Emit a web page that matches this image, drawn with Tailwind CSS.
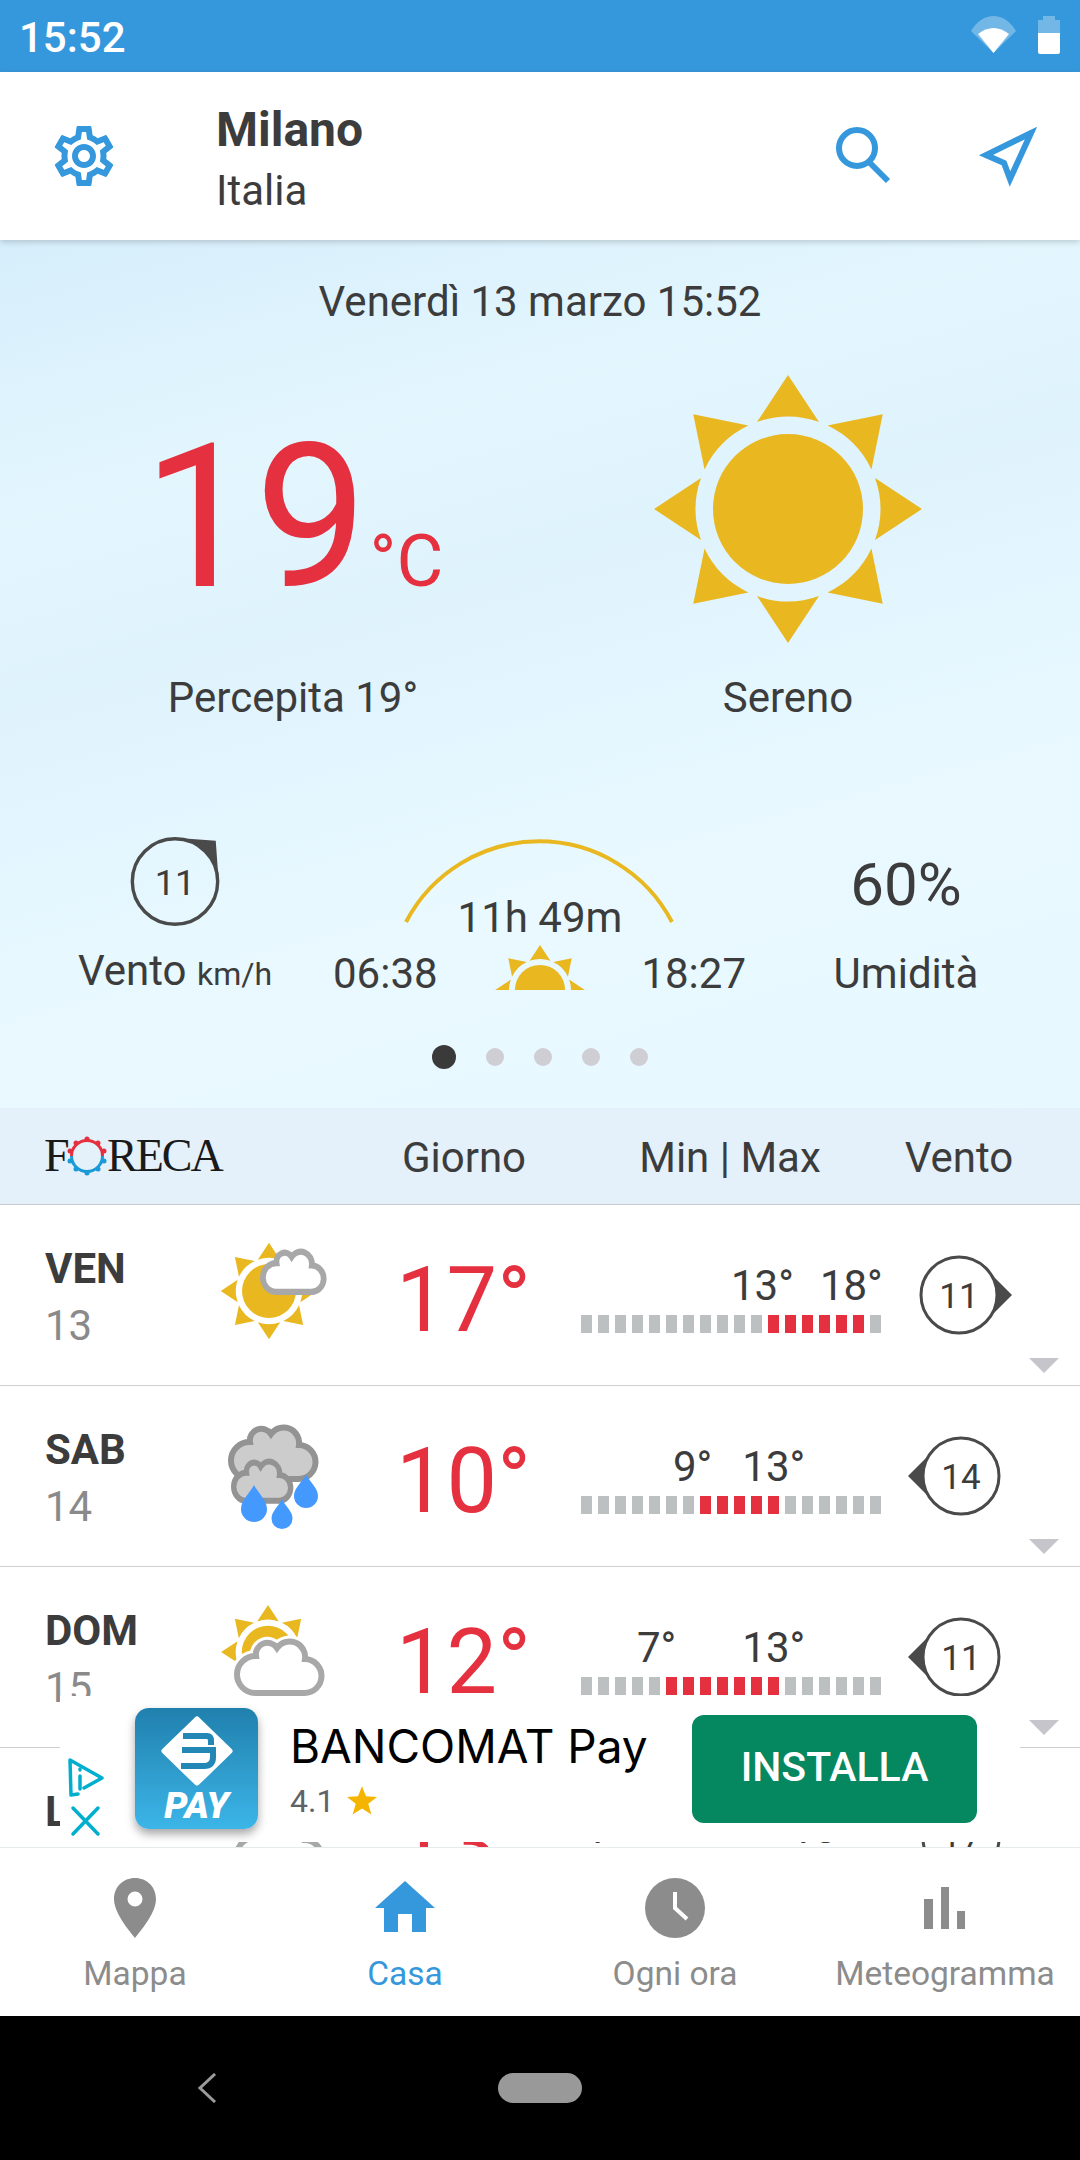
<!DOCTYPE html>
<html lang="it">
<head>
  <meta charset="UTF-8">
  <meta name="viewport" content="width=device-width, initial-scale=1.0">
  <title>Foreca</title>
  <script src="https://cdn.jsdelivr.net/npm/@tailwindcss/browser@4"></script>
</head>
<body class="bg-black font-['Roboto',sans-serif] text-[#3c3c3c]">
  <!-- shared shapes -->
  <svg class="absolute w-0 h-0">
    <defs>
      <path id="ray" d="M0-134 31-87A92 92 0 0 0-31-87Z"/>
      <g id="sun" fill="#e9b820">
        <circle r="75"/>
        <use href="#ray"/><use href="#ray" transform="rotate(45)"/><use href="#ray" transform="rotate(90)"/><use href="#ray" transform="rotate(135)"/>
        <use href="#ray" transform="rotate(180)"/><use href="#ray" transform="rotate(225)"/><use href="#ray" transform="rotate(270)"/><use href="#ray" transform="rotate(315)"/>
      </g>
      <g id="sun-top" fill="#e9b820">
        <circle r="75"/>
        <use href="#ray"/><use href="#ray" transform="rotate(45)"/><use href="#ray" transform="rotate(-45)"/><use href="#ray" transform="rotate(-90)"/>
      </g>
      <path id="cloud" d="M22 55A18.500 18.500 0 0 1 23 18 11.500 11.500 0 0 1 44 10 15.500 15.500 0 0 1 72 21 17 17 0 0 1 71 55Z"/>
    </defs>
  </svg>

  <div class="relative w-[1080px] h-[2160px] overflow-hidden flex flex-col bg-white">
    <!-- status bar -->
    <div class="h-[72px] bg-[#3698dc] flex items-center justify-between pl-[19px] shrink-0">
      <span class="text-white text-[42px] leading-[72px] pt-[3px] font-medium">15:52</span>
      <svg class="w-[110px] h-[72px]" viewBox="970 0 110 72">
        <path d="M971 31C983 11 1004 11 1016 31L993.500 53Z" fill="#fff" fill-opacity=".3"/>
        <path d="M978 34C988 26 999 26 1009 34L993.500 53Z" fill="#fff"/>
        <path d="M1043 16H1055V20H1060V33H1038V20H1043Z" fill="#fff" fill-opacity=".3"/>
        <path d="M1038 33H1060V52Q1060 54 1058 54H1040Q1038 54 1038 52Z" fill="#fff"/>
      </svg>
    </div>

    <!-- header -->
    <div class="relative z-10 h-[168px] bg-white shadow-[0_2px_6px_rgba(0,0,0,0.18)] flex shrink-0">
      <div class="w-[216px] flex items-center pl-[48px]">
        <svg class="w-[72px] h-[72px]" viewBox="0 0 24 24" fill="#3698dc"><path d="M19.43 12.98c.04-.32.07-.64.07-.98 0-.34-.03-.66-.07-.98l2.11-1.65c.19-.15.24-.42.12-.64l-2-3.46c-.09-.16-.26-.25-.44-.25-.06 0-.12.01-.17.03l-2.49 1c-.52-.4-1.08-.73-1.69-.98l-.38-2.65C14.46 2.18 14.25 2 14 2h-4c-.25 0-.46.18-.49.42l-.38 2.65c-.61.25-1.17.59-1.69.98l-2.49-1c-.06-.02-.12-.03-.18-.03-.17 0-.34.09-.43.25l-2 3.46c-.13.22-.07.49.12.64l2.11 1.65c-.04.32-.07.65-.07.98 0 .33.03.66.07.98l-2.11 1.65c-.19.15-.24.42-.12.64l2 3.46c.09.16.26.25.44.25.06 0 .12-.01.17-.03l2.49-1c.52.4 1.08.73 1.69.98l.38 2.65c.03.24.24.42.49.42h4c.25 0 .46-.18.49-.42l.38-2.65c.61-.25 1.17-.59 1.69-.98l2.49 1c.06.02.12.03.18.03.17 0 .34-.09.43-.25l2-3.46c.12-.22.07-.49-.12-.64l-2.11-1.65zm-1.98-1.71c.04.31.05.52.05.73 0 .21-.02.43-.05.73l-.14 1.13.89.7 1.08.84-.7 1.21-1.27-.51-1.04-.42-.9.68c-.43.32-.84.56-1.25.73l-1.06.43-.16 1.13-.2 1.35h-1.4l-.19-1.35-.16-1.13-1.06-.43c-.43-.18-.83-.41-1.23-.71l-.91-.7-1.06.43-1.27.51-.7-1.21 1.08-.84.89-.7-.14-1.13c-.03-.31-.05-.54-.05-.74s.02-.43.05-.73l.14-1.13-.89-.7-1.08-.84.7-1.21 1.27.51 1.04.42.9-.68c.43-.32.84-.56 1.25-.73l1.06-.43.16-1.13.2-1.35h1.39l.19 1.35.16 1.13 1.06.43c.43.18.83.41 1.23.71l.91.7 1.06-.43 1.27-.51.7 1.21-1.07.85-.89.7.14 1.13zM12 8c-2.21 0-4 1.79-4 4s1.79 4 4 4 4-1.79 4-4-1.79-4-4-4zm0 6c-1.1 0-2-.9-2-2s.9-2 2-2 2 .9 2 2-.9 2-2 2z"/></svg>
      </div>
      <div class="flex-1 pt-[29px]">
        <div class="text-[48px] leading-[58px] font-bold">Milano</div>
        <div class="text-[42px] leading-[48px] mt-[8px]">Italia</div>
      </div>
      <svg class="w-[280px] h-[168px]" viewBox="800 72 280 168" fill="none" stroke="#3698dc" stroke-width="6">
        <circle cx="857" cy="148" r="18"/>
        <path d="M869 162 888 181"/>
        <path d="M1031 133 986 155 1004 163 1010 179Z" stroke-linejoin="miter"/>
      </svg>
    </div>

    <!-- current conditions -->
    <div class="h-[868px] shrink-0 bg-[linear-gradient(165deg,#d6eefb_0%,#e3f6fe_25%,#dff3fd_40%,#e9f9ff_70%,#e7f8ff_100%)]">
      <div class="text-center text-[42px] leading-[48px] pt-[38px]">Venerdì 13 marzo 15:52</div>

      <div class="flex h-[398px]">
        <div class="w-[586px] flex flex-col items-center">
          <div class="mt-[92px] h-[200px] flex items-baseline text-[#e5303f]">
            <span class="text-[200px] leading-[200px]">19</span>
            <span class="text-[72px] leading-[66px] ml-[2px]">°C</span>
          </div>
          <div class="mt-[56px] text-[42px] leading-[48px]">Percepita 19°</div>
        </div>
        <div class="w-[404px] flex flex-col items-center">
          <svg class="mt-[48px] w-[270px] h-[270px]" viewBox="-135 -135 270 270"><use href="#sun"/></svg>
          <div class="mt-[30px] text-[42px] leading-[48px]">Sereno</div>
        </div>
      </div>

      <div class="flex pl-[20px] mt-[109px] h-[165px]">
        <div class="w-[310px] flex flex-col items-center">
          <svg class="w-[100px] h-[100px]" viewBox="125 833 100 100">
            <circle cx="175" cy="883" r="44" fill="none" stroke="#4a4a4a" stroke-width="3.500"/>
            <path d="M175 838 217 841 220 883A45 45 0 0 0 175 838Z" fill="#4a4a4a"/>
            <text x="175" y="897" text-anchor="middle" font-size="37" fill="#3c3c3c">11</text>
          </svg>
          <div class="mt-[17px] text-[42px] leading-[48px]">Vento <span class="text-[32px]">km/h</span></div>
        </div>
        <div class="w-[420px] flex flex-col items-center">
          <svg class="w-[290px] h-[87px] mt-[3px] shrink-0" viewBox="395 836 290 87" fill="none"><path d="M406 922A150 150 0 0 1 672 922" stroke="#e9b820" stroke-width="4"/></svg>
          <div class="-mt-[29px] text-[42px] leading-[48px]">11h 49m</div>
          <div class="w-full flex justify-between items-end pl-[3px] pr-[4px] mt-[8px]">
            <span class="text-[42px] leading-[48px]">06:38</span>
            <svg class="w-[94px] h-[45px] -mt-[5px] mb-[8px]" viewBox="-47 -45 94 45"><use href="#sun" transform="scale(.335)"/></svg>
            <span class="text-[42px] leading-[48px]">18:27</span>
          </div>
        </div>
        <div class="w-[312px] flex flex-col items-center">
          <div class="mt-[20px] text-[60px] leading-[64px]">60%</div>
          <div class="mt-[33px] text-[42px] leading-[48px]">Umidità</div>
        </div>
      </div>

      <div class="flex justify-center items-center gap-[30px] mt-[47px]">
        <div class="w-[24px] h-[24px] rounded-full bg-[#3a3a3a]"></div>
        <div class="w-[18px] h-[18px] rounded-full bg-[#ceced4]"></div>
        <div class="w-[18px] h-[18px] rounded-full bg-[#ceced4]"></div>
        <div class="w-[18px] h-[18px] rounded-full bg-[#ceced4]"></div>
        <div class="w-[18px] h-[18px] rounded-full bg-[#ceced4]"></div>
      </div>
    </div>

    <!-- table head -->
    <div class="h-[97px] shrink-0 bg-[#e4f0fa] border-b border-[#c5cbd0] flex items-center text-[42px] leading-[48px]">
      <div class="w-[340px] pl-[44px] flex items-center text-[#1a1a1a] font-['Liberation_Serif',serif] text-[46px] leading-[48px] tracking-[-2px]">
        <span class="w-[23px]">F</span>
        <svg class="w-[40px] h-[40px] shrink-0" viewBox="-20 -20 40 40" fill="none" stroke-width="3">
          <path d="M-15.500 0A15.500 15.500 0 0 1 15.500 0" stroke="#e5303f"/>
          <path d="M-15.500 0A15.500 15.500 0 0 0 15.500 0" stroke="#1a9ad6"/>
          <g fill="#e5303f" stroke="none"><circle cx="0" cy="-17" r="2.500"/><circle cx="-11" cy="-13" r="2.500"/><circle cx="11" cy="-13" r="2.500"/><circle cx="-17" cy="-5" r="2.500"/><circle cx="17" cy="-5" r="2.500"/></g>
          <g fill="#1a9ad6" stroke="none"><circle cx="0" cy="17" r="2.500"/><circle cx="-11" cy="13" r="2.500"/><circle cx="11" cy="13" r="2.500"/><circle cx="-17" cy="5" r="2.500"/><circle cx="17" cy="5" r="2.500"/></g>
        </svg>
        <span>RECA</span>
      </div>
      <div class="w-[248px] text-center pt-[4px]">Giorno</div>
      <div class="w-[284px] text-center pt-[4px]">Min | Max</div>
      <div class="w-[174px] text-center pt-[4px]">Vento</div>
    </div>

    <!-- daily list -->
    <div class="flex-1 overflow-hidden">
      <!-- friday -->
      <div class="relative h-[181px] border-b border-[#cfcfcf] flex pl-[45px]">
        <div class="w-[165px] pt-[41px]">
          <div class="text-[42px] leading-[46px] font-bold">VEN</div>
          <div class="text-[42px] leading-[48px] mt-[10px] text-[#8a8a8a]">13</div>
        </div>
        <svg class="w-[120px] h-[180px]" viewBox="210 0 120 180">
          <use href="#sun" transform="translate(269 86) scale(.36)"/>
          <use href="#cloud" transform="translate(260 44) scale(.72 .78)" fill="#fff" stroke="#a8a8a8" stroke-width="8"/>
        </svg>
        <div class="w-[251px] pl-[66px] pt-[51px] text-[90px] leading-[90px] text-[#e5303f]">17°</div>
        <div class="w-[300px] pt-[57px]">
          <div class="flex text-[42px] leading-[48px]"><span class="ml-[150px]">13°</span><span class="ml-[26px]">18°</span></div>
          <div class="flex gap-[6px] mt-[5px]">
            <i class="w-[11px] h-[18px] bg-[#bcc0c1]"></i><i class="w-[11px] h-[18px] bg-[#bcc0c1]"></i><i class="w-[11px] h-[18px] bg-[#bcc0c1]"></i><i class="w-[11px] h-[18px] bg-[#bcc0c1]"></i><i class="w-[11px] h-[18px] bg-[#bcc0c1]"></i><i class="w-[11px] h-[18px] bg-[#bcc0c1]"></i><i class="w-[11px] h-[18px] bg-[#bcc0c1]"></i><i class="w-[11px] h-[18px] bg-[#bcc0c1]"></i><i class="w-[11px] h-[18px] bg-[#bcc0c1]"></i><i class="w-[11px] h-[18px] bg-[#bcc0c1]"></i><i class="w-[11px] h-[18px] bg-[#bcc0c1]"></i>
            <i class="w-[11px] h-[18px] bg-[#e5303f]"></i><i class="w-[11px] h-[18px] bg-[#e5303f]"></i><i class="w-[11px] h-[18px] bg-[#e5303f]"></i><i class="w-[11px] h-[18px] bg-[#e5303f]"></i><i class="w-[11px] h-[18px] bg-[#e5303f]"></i><i class="w-[11px] h-[18px] bg-[#e5303f]"></i>
            <i class="w-[11px] h-[18px] bg-[#bcc0c1]"></i>
          </div>
        </div>
        <svg class="w-[199px] h-[180px]" viewBox="881 0 199 180">
          <path d="M988 66 1012 90 988 114Z" fill="#4a4a4a"/>
          <circle cx="959" cy="90" r="38" fill="#fff" stroke="#4a4a4a" stroke-width="3"/>
          <text x="959" y="103" text-anchor="middle" font-size="35" fill="#3c3c3c">11</text>
          <path d="M1029 153H1059L1044 168Z" fill="#c6c5cb"/>
        </svg>
      </div>

      <!-- saturday -->
      <div class="relative h-[181px] border-b border-[#cfcfcf] flex pl-[45px]">
        <div class="w-[165px] pt-[41px]">
          <div class="text-[42px] leading-[46px] font-bold">SAB</div>
          <div class="text-[42px] leading-[48px] mt-[10px] text-[#8a8a8a]">14</div>
        </div>
        <svg class="w-[120px] h-[180px]" viewBox="210 0 120 180">
          <use href="#cloud" transform="translate(227 38)" fill="#ccc" stroke="#939393" stroke-width="6"/>
          <use href="#cloud" transform="translate(231 73) scale(.674 .76)" fill="#ccc" stroke="#939393" stroke-width="8"/>
          <g fill="#4499ff">
            <path d="M254 99C258 107 267 114 267 123A13 13 0 0 1 241 123C241 114 250 107 254 99Z"/>
            <path d="M282 113C285 120 292.500 125 292.500 132.500A10.500 10.500 0 0 1 271.500 132.500C271.500 125 279 120 282 113Z"/>
            <path d="M306 89C310 96 318 102 318 110A12 12 0 0 1 294 110C294 102 302 96 306 89Z"/>
          </g>
        </svg>
        <div class="w-[251px] pl-[66px] pt-[51px] text-[90px] leading-[90px] text-[#e5303f]">10°</div>
        <div class="w-[300px] pt-[57px]">
          <div class="flex text-[42px] leading-[48px]"><span class="ml-[92px]">9°</span><span class="ml-[30px]">13°</span></div>
          <div class="flex gap-[6px] mt-[5px]">
            <i class="w-[11px] h-[18px] bg-[#bcc0c1]"></i><i class="w-[11px] h-[18px] bg-[#bcc0c1]"></i><i class="w-[11px] h-[18px] bg-[#bcc0c1]"></i><i class="w-[11px] h-[18px] bg-[#bcc0c1]"></i><i class="w-[11px] h-[18px] bg-[#bcc0c1]"></i><i class="w-[11px] h-[18px] bg-[#bcc0c1]"></i><i class="w-[11px] h-[18px] bg-[#bcc0c1]"></i>
            <i class="w-[11px] h-[18px] bg-[#e5303f]"></i><i class="w-[11px] h-[18px] bg-[#e5303f]"></i><i class="w-[11px] h-[18px] bg-[#e5303f]"></i><i class="w-[11px] h-[18px] bg-[#e5303f]"></i><i class="w-[11px] h-[18px] bg-[#e5303f]"></i>
            <i class="w-[11px] h-[18px] bg-[#bcc0c1]"></i><i class="w-[11px] h-[18px] bg-[#bcc0c1]"></i><i class="w-[11px] h-[18px] bg-[#bcc0c1]"></i><i class="w-[11px] h-[18px] bg-[#bcc0c1]"></i><i class="w-[11px] h-[18px] bg-[#bcc0c1]"></i><i class="w-[11px] h-[18px] bg-[#bcc0c1]"></i>
          </div>
        </div>
        <svg class="w-[199px] h-[180px]" viewBox="881 0 199 180">
          <path d="M932 66 908 90 932 114Z" fill="#4a4a4a"/>
          <circle cx="961" cy="90" r="38" fill="#fff" stroke="#4a4a4a" stroke-width="3"/>
          <text x="961" y="103" text-anchor="middle" font-size="35" fill="#3c3c3c">14</text>
          <path d="M1029 153H1059L1044 168Z" fill="#c6c5cb"/>
        </svg>
      </div>

      <!-- sunday -->
      <div class="relative h-[181px] border-b border-[#cfcfcf] flex pl-[45px]">
        <div class="w-[165px] pt-[41px]">
          <div class="text-[42px] leading-[46px] font-bold">DOM</div>
          <div class="text-[42px] leading-[48px] mt-[10px] text-[#8a8a8a]">15</div>
        </div>
        <svg class="w-[120px] h-[180px]" viewBox="210 0 120 180">
          <use href="#sun-top" transform="translate(268 85) scale(.35)"/>
          <use href="#cloud" transform="translate(233 71)" fill="#fff" stroke="#fff" stroke-width="12"/>
          <use href="#cloud" transform="translate(233 71)" fill="#fff" stroke="#a8a8a8" stroke-width="6"/>
        </svg>
        <div class="w-[251px] pl-[66px] pt-[51px] text-[90px] leading-[90px] text-[#e5303f]">12°</div>
        <div class="w-[300px] pt-[57px]">
          <div class="flex text-[42px] leading-[48px]"><span class="ml-[56px]">7°</span><span class="ml-[66px]">13°</span></div>
          <div class="flex gap-[6px] mt-[5px]">
            <i class="w-[11px] h-[18px] bg-[#bcc0c1]"></i><i class="w-[11px] h-[18px] bg-[#bcc0c1]"></i><i class="w-[11px] h-[18px] bg-[#bcc0c1]"></i><i class="w-[11px] h-[18px] bg-[#bcc0c1]"></i><i class="w-[11px] h-[18px] bg-[#bcc0c1]"></i>
            <i class="w-[11px] h-[18px] bg-[#e5303f]"></i><i class="w-[11px] h-[18px] bg-[#e5303f]"></i><i class="w-[11px] h-[18px] bg-[#e5303f]"></i><i class="w-[11px] h-[18px] bg-[#e5303f]"></i><i class="w-[11px] h-[18px] bg-[#e5303f]"></i><i class="w-[11px] h-[18px] bg-[#e5303f]"></i><i class="w-[11px] h-[18px] bg-[#e5303f]"></i>
            <i class="w-[11px] h-[18px] bg-[#bcc0c1]"></i><i class="w-[11px] h-[18px] bg-[#bcc0c1]"></i><i class="w-[11px] h-[18px] bg-[#bcc0c1]"></i><i class="w-[11px] h-[18px] bg-[#bcc0c1]"></i><i class="w-[11px] h-[18px] bg-[#bcc0c1]"></i><i class="w-[11px] h-[18px] bg-[#bcc0c1]"></i>
          </div>
        </div>
        <svg class="w-[199px] h-[180px]" viewBox="881 0 199 180">
          <path d="M932 66 908 90 932 114Z" fill="#4a4a4a"/>
          <circle cx="961" cy="90" r="38" fill="#fff" stroke="#4a4a4a" stroke-width="3"/>
          <text x="961" y="103" text-anchor="middle" font-size="35" fill="#3c3c3c">11</text>
          <path d="M1029 153H1059L1044 168Z" fill="#c6c5cb"/>
        </svg>
      </div>

      <!-- monday, mostly behind the banner -->
      <div class="relative h-[181px] flex pl-[45px]">
        <div class="w-[165px] pt-[41px]">
          <div class="text-[42px] leading-[46px] font-bold">LUN</div>
        </div>
        <svg class="w-[120px] h-[180px]" viewBox="210 0 120 180">
          <use href="#cloud" transform="translate(233 71)" fill="#fff" stroke="#a8a8a8" stroke-width="6"/>
        </svg>
        <div class="w-[251px] pl-[66px] pt-[51px] text-[90px] leading-[90px] text-[#e5303f]">13°</div>
        <div class="w-[300px] pt-[57px]">
          <div class="flex text-[42px] leading-[48px]"><span>4°</span><span class="ml-[170px]">13°</span></div>
        </div>
        <svg class="w-[199px] h-[180px]" viewBox="881 0 199 180">
          <circle cx="961" cy="90" r="38" fill="#fff" stroke="#4a4a4a" stroke-width="3"/>
          <text x="961" y="103" text-anchor="middle" font-size="35" fill="#3c3c3c">17</text>
        </svg>
      </div>
    </div>

    <!-- bottom nav -->
    <div class="relative z-10 h-[169px] shrink-0 bg-white border-t border-[#e6ebee] flex">
      <div class="w-1/4 flex flex-col items-center text-[#8c8c8c]">
        <svg class="w-[270px] h-[107px]" viewBox="0 1848 270 107" fill="#8c8c8c">
          <path fill-rule="evenodd" d="M135 1878C123 1878 114 1887 114 1899 114 1912 127 1928 135 1938 143 1928 156 1912 156 1899 156 1887 147 1878 135 1878ZM135 1891.500A7.500 7.500 0 1 1 135 1906.500 7.500 7.500 0 1 1 135 1891.500Z"/>
        </svg>
        <span class="text-[33.5px] leading-[38px]">Mappa</span>
      </div>
      <div class="w-1/4 flex flex-col items-center text-[#3698dc]">
        <svg class="w-[270px] h-[107px]" viewBox="270 1848 270 107" fill="#3698dc">
          <path d="M405 1881 435 1908H426V1932H412V1914H398V1932H384V1908H375Z"/>
        </svg>
        <span class="text-[33.5px] leading-[38px]">Casa</span>
      </div>
      <div class="w-1/4 flex flex-col items-center text-[#8c8c8c]">
        <svg class="w-[270px] h-[107px]" viewBox="540 1848 270 107">
          <circle cx="675" cy="1908" r="30" fill="#8c8c8c"/>
          <path d="M675 1892V1908L687 1919" fill="none" stroke="#fff" stroke-width="4"/>
        </svg>
        <span class="text-[33.5px] leading-[38px]">Ogni ora</span>
      </div>
      <div class="w-1/4 flex flex-col items-center text-[#8c8c8c]">
        <svg class="w-[270px] h-[107px]" viewBox="810 1848 270 107" fill="#8c8c8c">
          <path d="M924 1899H933V1929H924ZM941 1887H949V1929H941ZM957 1911H965V1929H957Z"/>
        </svg>
        <span class="text-[33.5px] leading-[38px]">Meteogramma</span>
      </div>
    </div>

    <!-- android nav -->
    <div class="h-[144px] shrink-0 bg-black flex items-start pt-[57px]">
      <svg class="w-[1080px] h-[30px]" viewBox="0 2073 1080 30">
        <path d="M215 2074 200 2088 215 2102" fill="none" stroke="#9a9a9a" stroke-width="3"/>
        <rect x="498" y="2073" width="84" height="30" rx="15" fill="#999"/>
      </svg>
    </div>

    <!-- ad banner over the list -->
    <div class="absolute z-20 left-[60px] top-[1696px] w-[960px] h-[146px] bg-white flex items-start">
      <svg class="w-[75px] h-[146px] shrink-0" viewBox="0 0 75 146" fill="none" stroke="#00aecd" stroke-width="3.500" stroke-linecap="round" stroke-linejoin="round">
        <path d="M18 98 11 99 10 64 42 82 24 92"/>
        <path d="M20 80V93M20 73V74"/>
        <path d="M13 112 38 138M38 112 13 138"/>
      </svg>
      <div class="relative mt-[12px] w-[123px] h-[121px] shrink-0 rounded-[14px] bg-[linear-gradient(180deg,#2080ad,#3cb5e8)] shadow-[0_5px_10px_rgba(0,0,0,0.35)] flex flex-col items-center">
        <svg class="w-[84px] h-[76px] mt-[5px]" viewBox="-42 -38 84 76">
          <rect x="-26" y="-26" width="52" height="52" rx="3" fill="#fff" transform="scale(1 .97) rotate(45)"/>
          <path d="M-14-15H10Q14-15 14-10V-6M-15-1H16V6Q16 15 7 15H-16" fill="none" stroke="#2388b5" stroke-width="6"/>
        </svg>
        <span class="text-white font-black italic text-[37px] leading-[36px] -mt-[1px]">PAY</span>
      </div>
      <div class="ml-[32px] w-[402px] pt-[23px]">
        <div class="text-black font-['Inter',sans-serif] text-[46px] leading-[54px]">BANCOMAT Pay</div>
        <div class="flex items-center mt-[9px] text-[#5f6368] text-[32px] leading-[38px]">
          4.1
          <svg class="w-[30px] h-[30px] ml-[13px] -mt-[2px]" viewBox="0 0 24 24" fill="#f4b400"><path d="M12 1 15.200 9 24 9.500 17 15 19.500 23.500 12 18.700 4.500 23.500 7 15 0 9.500 8.800 9Z"/></svg>
        </div>
      </div>
      <div class="mt-[19px] w-[285px] h-[108px] pb-[3px] rounded-[12px] bg-[#058760] text-white font-medium text-[41px] flex items-center justify-center">INSTALLA</div>
    </div>
  </div>
</body>
</html>
